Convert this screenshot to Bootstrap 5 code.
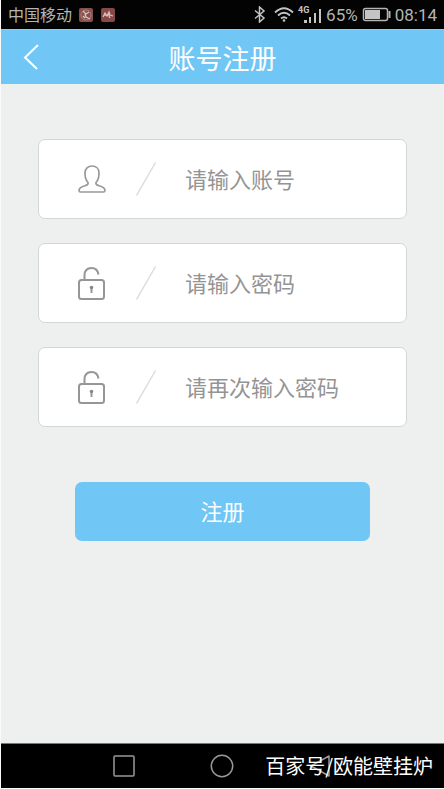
<!DOCTYPE html>
<html lang="zh-CN">
<head>
<meta charset="utf-8">
<meta name="viewport" content="width=device-width, initial-scale=1">
<title>账号注册</title>
<link href="https://cdn.jsdelivr.net/npm/bootstrap@5.3.0/dist/css/bootstrap.min.css" rel="stylesheet">
<style>
  body { font-family: Roboto, "Noto Sans CJK SC", sans-serif; background: #eef0f0; border-left: 1px solid #fafafa; border-bottom: 1px solid #fafafa; }
  svg { display: block; flex: none; }
  .status-bar { height: 29px; background: #030303; color: #b4b4b4; font-size: 17px; line-height: 28px; padding: 0 7px; }
  .carrier { font-size: 16px; margin-right: 7px; padding-top: 2px; }
  .title-bar { height: 55px; background: #70c6f5; border-top: 1px solid #8bcdf2; color: #fff; }
  .title-bar h1 { font-size: 27px; line-height: 50px; font-weight: 400; padding-top: 6px; }
  .back-btn { width: 60px; }
  .form-area { padding: 55px 37px 0; }
  .field-stack { gap: 24px; }
  .field-box { height: 80px; background: #fff; border: 1px solid #d4d6d6; border-radius: 7px; padding-left: 38px; }
  .field-box .slash { margin: 0 28px; }
  .field-box input { font-size: 22px; line-height: 32px; color: #777; padding: 4px 0 0; }
  .field-box input::placeholder { color: #949494; opacity: 1; }
  .submit-wrap { padding: 55px 37px 0; }
  .submit-btn, .submit-btn:hover { height: 59px; background: #70c6f5; color: #fff; font-size: 22px; border: 0; border-radius: 7px; padding: 8px 0 6px; }
  .nav-bar { height: 45px; background: #000; border-top: 1px solid #777; gap: 74px; padding-right: 1px; }
  .credit { right: 11px; top: 7px; font-size: 20px; line-height: 30px; color: #fff; font-family: "Noto Sans CJK SC", sans-serif; }
</style>
<script src="https://cdn.jsdelivr.net/npm/bootstrap@5.3.0/dist/js/bootstrap.bundle.min.js"></script>
</head>
<body class="d-flex flex-column min-vh-100">
<div class="status-bar d-flex align-items-center justify-content-between">
  <div class="d-flex align-items-center">
    <span class="carrier">中国移动</span>
    <svg width="36" height="14" viewBox="0 0 36 14" fill="none">
      <rect width="14" height="14" rx="2" fill="#87504d"/>
      <circle cx="7" cy="7" r="5" stroke="#a98280"/>
      <path d="M4 3l3 3 3-2M6 6l1 3 4 2M4 8l2 2" stroke="#ddc4bf" stroke-width="1.3"/>
      <rect x="22" width="14" height="14" rx="2" fill="#874947"/>
      <path d="M24 9l2-4 2 3 2-4 1 3 3 1M25 7h6M30 8l1 2" stroke="#ddbcb8" stroke-width="1.3"/>
    </svg>
  </div>
  <div class="d-flex align-items-center">
    <svg width="12" height="17" viewBox="0 0 12 17" fill="none" stroke="#c4c4c4" stroke-width="1.5"><path d="M1 4.500l9 7.500-4.500 4V1L10 5 1 12.500"/></svg>
    <svg class="ms-2" width="20" height="17" viewBox="0 0 20 17" fill="none" stroke="#c4c4c4" stroke-width="1.800"><path d="M1 6.500Q10-2 19 6.500M4 9.500q6-5.500 12 0M7 12.500q3-2.600 6 0"/><circle cx="10" cy="14.500" r="1.300" fill="#c4c4c4" stroke="none"/></svg>
    <svg class="ms-1 me-1" width="24" height="20" viewBox="0 0 24 20" fill="#c4c4c4"><text x="0" y="8" font-size="9" font-weight="700" font-family="Roboto, sans-serif">4G</text><path d="M6 15h3v3H6zM11 12h2v6h-2zM16 8h2v10h-2zM21 4h2v14h-2z"/></svg>
    <span>65%</span>
    <svg class="ms-1 me-1" width="29" height="15" viewBox="0 0 29 15" fill="none"><rect x="1.500" y="1.500" width="24" height="12" rx="2" stroke="#b4b4b4" stroke-width="1.500"/><rect x="3" y="3" width="15" height="9" fill="#c4c4c4"/><path d="M27.500 4v7" stroke="#b4b4b4" stroke-width="2"/></svg>
    <span>08:14</span>
  </div>
</div>
<header class="title-bar d-flex align-items-center">
  <button type="button" class="back-btn btn border-0 p-0 d-flex justify-content-center" aria-label="返回">
    <svg width="16" height="28" viewBox="0 0 16 28" fill="none" stroke="#fff" stroke-width="2"><path d="M15 2L2 14.500 14 26"/></svg>
  </button>
  <h1 class="flex-grow-1 text-center m-0">账号注册</h1>
  <span class="back-btn"></span>
</header>
<main class="flex-grow-1">
  <form class="form-area">
    <div class="field-stack d-flex flex-column">
      <label class="field-box d-flex align-items-center">
        <svg width="30" height="30" viewBox="0 0 30 30" fill="none" stroke="#999" stroke-width="1.700" stroke-linejoin="round"><path d="M11 18.500C8.500 16 8 12 8 9c0-4.500 3-7 7-7s7 2.500 7 7c0 3-.5 7-3 9.500-.5 1.500.5 2.500 3 3.300 4 1.200 6 2 6 4.500 0 1.200-.5 1.700-1.500 1.700h-23C2.500 28 2 27.500 2 26.300c0-2.500 2-3.300 6-4.500 2.500-.8 3.500-1.800 3-3.300z"/></svg>
        <svg class="slash" width="22" height="36" viewBox="0 0 22 36" stroke="#dcdcdc" stroke-width="1.500"><path d="M1.500 34.500L20.500 1.500"/></svg>
        <input class="form-control border-0 shadow-none bg-transparent" type="text" placeholder="请输入账号" aria-label="账号">
      </label>
      <label class="field-box d-flex align-items-center">
        <svg width="30" height="36" viewBox="0 0 30 36" fill="none" stroke="#969696" stroke-width="2"><rect x="2" y="15" width="25" height="19" rx="2.500"/><path d="M7.500 15v-4.500C7.500 5.500 10.500 3 14.500 3c3.500 0 6.300 2 7 6.500"/><path d="M14.500 22v6"/><circle cx="14.500" cy="22.500" r="1.800" fill="#888" stroke="none"/></svg>
        <svg class="slash" width="22" height="36" viewBox="0 0 22 36" stroke="#dcdcdc" stroke-width="1.500"><path d="M1.500 34.500L20.500 1.500"/></svg>
        <input class="form-control border-0 shadow-none bg-transparent" type="password" placeholder="请输入密码" aria-label="密码">
      </label>
      <label class="field-box d-flex align-items-center">
        <svg width="30" height="36" viewBox="0 0 30 36" fill="none" stroke="#969696" stroke-width="2"><rect x="2" y="15" width="25" height="19" rx="2.500"/><path d="M7.500 15v-4.500C7.500 5.500 10.500 3 14.500 3c3.500 0 6.300 2 7 6.500"/><path d="M14.500 22v6"/><circle cx="14.500" cy="22.500" r="1.800" fill="#888" stroke="none"/></svg>
        <svg class="slash" width="22" height="36" viewBox="0 0 22 36" stroke="#dcdcdc" stroke-width="1.500"><path d="M1.500 34.500L20.500 1.500"/></svg>
        <input class="form-control border-0 shadow-none bg-transparent" type="password" placeholder="请再次输入密码" aria-label="再次输入密码">
      </label>
    </div>
    <div class="submit-wrap"><button type="button" class="submit-btn btn w-100">注册</button></div>
  </form>
</main>
<nav class="nav-bar position-relative d-flex align-items-center justify-content-center" aria-label="系统导航">
  <button type="button" class="btn border-0 p-0" aria-label="最近任务"><svg width="24" height="24" viewBox="0 0 24 24" fill="none" stroke="#999" stroke-width="1.500"><rect x="2" y="2" width="20" height="20" rx="1"/></svg></button>
  <button type="button" class="btn border-0 p-0" aria-label="主屏幕"><svg width="24" height="24" viewBox="0 0 24 24" fill="none" stroke="#999" stroke-width="1.500"><circle cx="12" cy="12" r="10.700"/></svg></button>
  <button type="button" class="btn border-0 p-0" aria-label="返回"><svg width="24" height="24" viewBox="0 0 24 24" fill="none" stroke="#999" stroke-width="1.500" stroke-linejoin="round"><path d="M21 2v20L3 12z"/></svg></button>
  <span class="credit position-absolute">百家号/欧能壁挂炉</span>
</nav>
</body>
</html>
